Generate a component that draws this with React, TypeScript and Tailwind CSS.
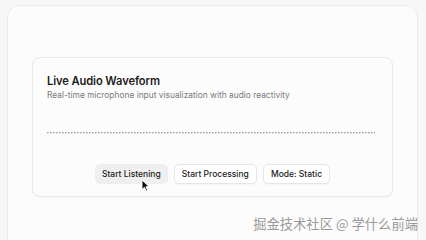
import { useState } from "react";

const BAR_COUNT = 110;

function Waveform() {
  const bars = Array.from({ length: BAR_COUNT }, (_, i) => i);
  return (
    <svg width="328" height="6" viewBox="0 0 328 6" className="block">
      {bars.map((i) => (
        <rect
          key={i}
          x={i * 3}
          y={2}
          width={1.6}
          height={1.4}
          fill="#a3a3a3"
        />
      ))}
    </svg>
  );
}

function Cursor() {
  return (
    <svg
      width="9"
      height="13"
      viewBox="0 0 9 13"
      className="absolute left-[46px] top-[15px]"
    >
      <path
        d="M1 1 L1 10.5 L3.4 8.4 L5.2 12 L6.6 11.3 L4.9 7.8 L8 7.6 Z"
        fill="#111"
        stroke="#fff"
        strokeWidth="0.9"
        strokeLinejoin="round"
      />
    </svg>
  );
}

export default function App() {
  const [listening, setListening] = useState(false);
  const [processing, setProcessing] = useState(false);
  const [mode, setMode] = useState("Static");

  return (
    <div className="relative h-[240px] w-[426px] overflow-hidden bg-[#f7f7f7] font-['Inter',sans-serif]">
      <div className="ml-[7px] mr-[8px] mt-[5px] h-[260px] rounded-xl border border-[#ebebeb] bg-[#fcfcfc] px-6 pt-[51px]">
        <div className="rounded-lg border border-[#e9e9e9] bg-[#fcfcfc] px-[14px] pt-[15px] pb-[12px] shadow-[0_1px_2px_rgba(0,0,0,0.03)]">
          <h2 className="text-[11.2px] font-semibold leading-[16px] tracking-[-0.01em] text-[#1c1c1c]">
            Live Audio Waveform
          </h2>
          <p className="text-[8.4px] leading-[12px] text-[#7a7a7a]">
            Real-time microphone input visualization with audio reactivity
          </p>
          <div className="mt-[29px] flex">
            <Waveform />
          </div>
          <div className="mt-[28px] flex justify-center gap-[6px]">
            <button
              onClick={() => setListening(!listening)}
              className="relative h-[20px] rounded-[5px] bg-[#efefef] px-[7px] text-[8.5px] font-medium text-[#222]"
            >
              {listening ? "Stop Listening" : "Start Listening"}
              <Cursor />
            </button>
            <button
              onClick={() => setProcessing(!processing)}
              className="h-[20px] rounded-[5px] border border-[#e6e6e6] bg-white px-[7px] text-[8.5px] font-medium text-[#222] shadow-[0_1px_1px_rgba(0,0,0,0.03)]"
            >
              {processing ? "Stop Processing" : "Start Processing"}
            </button>
            <button
              onClick={() => setMode(mode === "Static" ? "Live" : "Static")}
              className="h-[20px] rounded-[5px] border border-[#e6e6e6] bg-white px-[7px] text-[8.5px] font-medium text-[#222] shadow-[0_1px_1px_rgba(0,0,0,0.03)]"
            >
              Mode: {mode}
            </button>
          </div>
        </div>
      </div>
      <div className="absolute right-[8px] top-[214px] text-[13.3px] leading-[20px] text-[#9a9a9a] font-['Noto_Sans_CJK_SC',sans-serif]">
        掘金技术社区 @ 学什么前端
      </div>
    </div>
  );
}
